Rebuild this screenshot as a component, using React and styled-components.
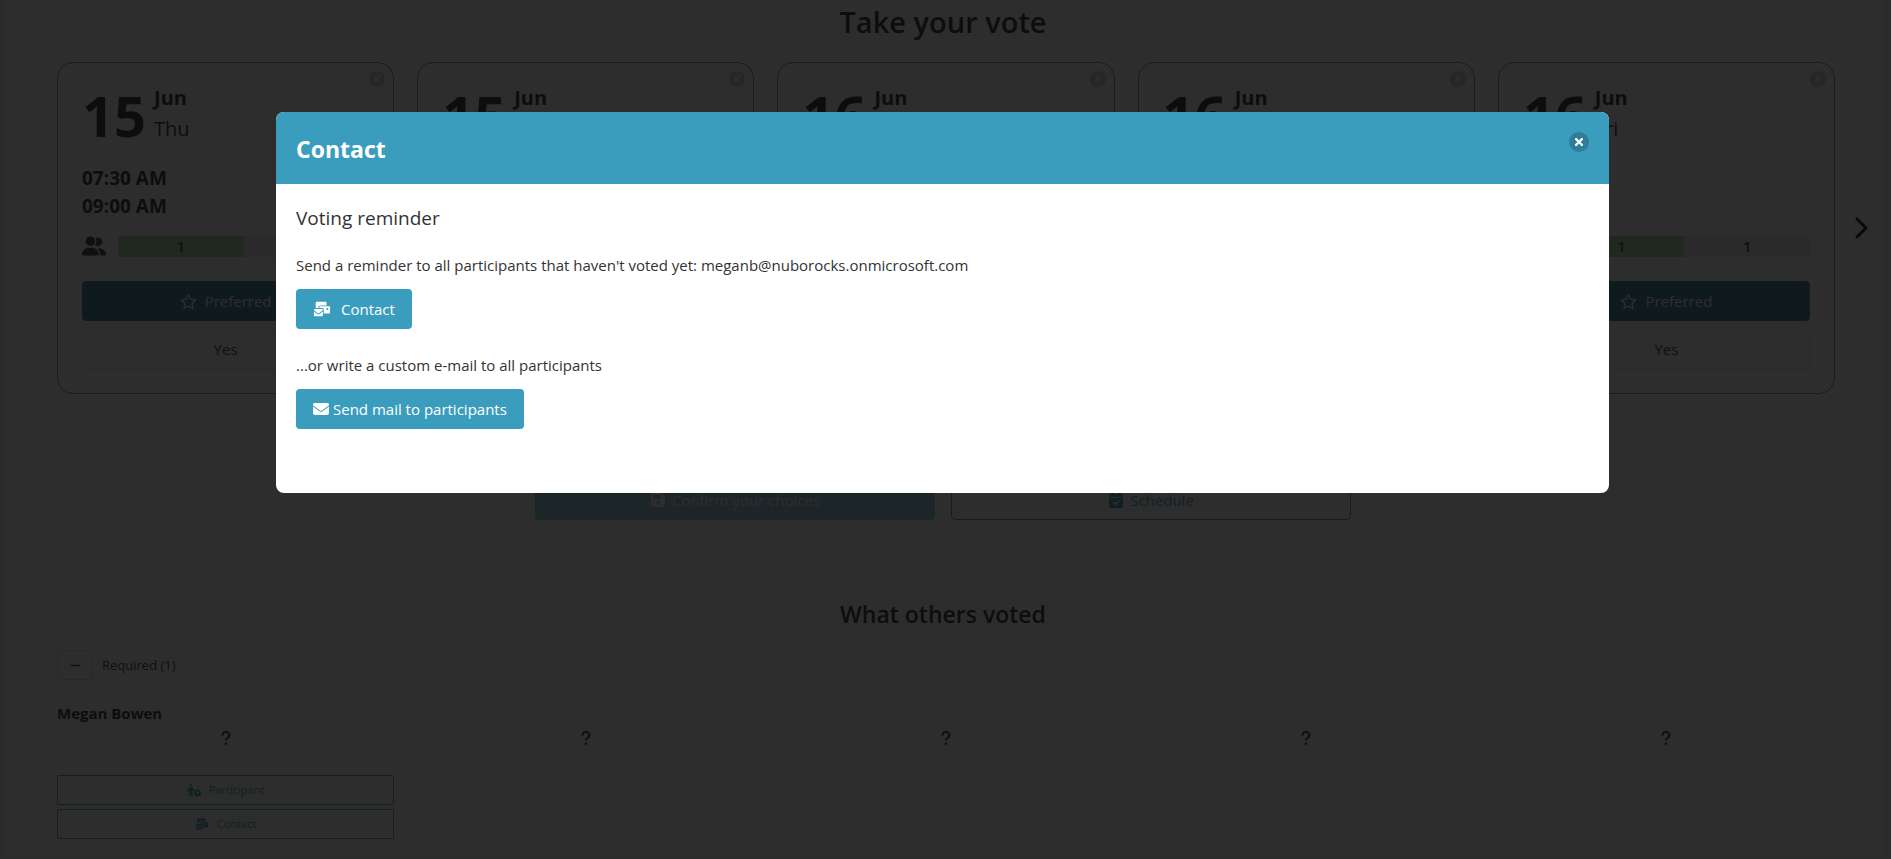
import React from "react";
import styled, { createGlobalStyle, css } from "styled-components";
import { FaTimes } from "react-icons/fa";
import {
  FaCalendarCheck,
  FaChevronRight,
  FaEnvelope,
  FaEnvelopesBulk,
  FaFloppyDisk,
  FaMinus,
  FaPersonCirclePlus,
  FaQuestion,
  FaRegStar,
  FaUserGroup,
} from "react-icons/fa6";

const slots = [
  { id: 1, day: 15, month: "Jun", weekday: "Thu", start: "07:30 AM", end: "09:00 AM" },
  { id: 2, day: 15, month: "Jun" },
  { id: 3, day: 16, month: "Jun" },
  { id: 4, day: 16, month: "Jun" },
  { id: 5, day: 16, month: "Jun", weekday: "Fri" },
];

export default function App() {
  return (
    <>
      <GlobalStyle />
      <Page>
        <Panel>
          <PageTitle>Take your vote</PageTitle>
          <SlotGrid>
            {slots.map((slot) => (
              <SlotCard key={slot.id} slot={slot} />
            ))}
          </SlotGrid>
          <NextButton type="button" aria-label="Next dates">
            <FaChevronRight />
          </NextButton>

          <Actions>
            <ActionButton type="button" $muted>
              <FaFloppyDisk size={16} /> Confirm your choices
            </ActionButton>
            <ActionButton type="button">
              <FaCalendarCheck size={16} /> Schedule
            </ActionButton>
          </Actions>

          <SectionTitle>What others voted</SectionTitle>
          <GroupRow>
            <ToggleButton type="button" aria-label="Collapse required">
              <FaMinus />
            </ToggleButton>
            <span>Required (1)</span>
          </GroupRow>
          <VoterName>Megan Bowen</VoterName>
          <VoteGrid>
            {slots.map((slot) => (
              <FaQuestion key={slot.id} size={16} />
            ))}
          </VoteGrid>
          <FooterGrid>
            <FooterButtons>
              <SmallButton type="button">
                <FaPersonCirclePlus /> Participant
              </SmallButton>
              <SmallButton type="button">
                <FaEnvelopesBulk /> Contact
              </SmallButton>
            </FooterButtons>
          </FooterGrid>
        </Panel>
      </Page>

      <Overlay>
        <Dialog role="dialog" aria-modal="true" aria-labelledby="contact-title">
          <DialogHeader>
            <DialogTitle id="contact-title">Contact</DialogTitle>
            <CloseButton type="button" aria-label="Close">
              <FaTimes />
            </CloseButton>
          </DialogHeader>
          <DialogBody>
            <DialogSubtitle>Voting reminder</DialogSubtitle>
            <DialogText>
              Send a reminder to all participants that haven't voted yet: meganb@nuborocks.onmicrosoft.com
            </DialogText>
            <PrimaryButton type="button" $gap={10}>
              <FaEnvelopesBulk size={18} /> Contact
            </PrimaryButton>
            <DialogText>...or write a custom e-mail to all participants</DialogText>
            <PrimaryButton type="button" $gap={4}>
              <FaEnvelope size={16} /> Send mail to participants
            </PrimaryButton>
          </DialogBody>
        </Dialog>
      </Overlay>
    </>
  );
}

function SlotCard({ slot }) {
  return (
    <Card>
      <RemoveButton type="button" aria-label="Remove date">
        <FaTimes />
      </RemoveButton>
      <DateRow>
        <Day>{slot.day}</Day>
        <div>
          <Month>{slot.month}</Month>
          <Weekday>{slot.weekday}</Weekday>
        </div>
      </DateRow>
      <Times>
        <div>{slot.start}</div>
        <div>{slot.end}</div>
      </Times>
      {slot.weekday && (
        <>
          <VotesRow>
            <FaUserGroup size={24} />
            <VotesBar>
              <VotesPart $yes>1</VotesPart>
              <VotesPart>1</VotesPart>
            </VotesBar>
          </VotesRow>
          <VoteButton type="button" $active>
            <FaRegStar size={17} /> Preferred
          </VoteButton>
          <VoteButton type="button">Yes</VoteButton>
        </>
      )}
    </Card>
  );
}

const GlobalStyle = createGlobalStyle`
  * {
    box-sizing: border-box;
  }

  body {
    margin: 0;
    height: 100vh;
    overflow: hidden;
    background-color: #f2f2f2;
    color: #333;
    font-family: "Open Sans", "Noto Sans", sans-serif;
    font-size: 15px;
    line-height: 24px;
  }

  button {
    font: inherit;
    cursor: pointer;
  }
`;

const Page = styled.main`
  padding: 0 9px 3px 3px;
`;

const Panel = styled.section`
  position: relative;
  padding: 0 47px 17px 54px;
  border-radius: 0 0 4px 4px;
  background-color: #fff;
`;

const PageTitle = styled.h1`
  margin: 0;
  padding: 2px 6px 20px 0;
  color: #222;
  font-size: 29px;
  font-weight: 600;
  line-height: 40px;
  text-align: center;
`;

const SlotGrid = styled.div`
  display: grid;
  grid-template-columns: repeat(5, 1fr);
  gap: 23px;
`;

const Card = styled.article`
  position: relative;
  height: 332px;
  padding: 20px 24px;
  border: 1px solid #3b9dbd;
  border-radius: 16px;
`;

const RemoveButton = styled.button`
  position: absolute;
  top: 8px;
  right: 8px;
  display: flex;
  justify-content: center;
  align-items: center;
  width: 16px;
  height: 16px;
  padding: 0;
  border: none;
  border-radius: 50%;
  background-color: #ccc;
  color: #fff;
  font-size: 10px;
`;

const DateRow = styled.div`
  display: flex;
  gap: 8px;
  height: 81px;
  color: #222;
`;

const Day = styled.div`
  font-size: 56px;
  font-weight: 700;
  line-height: 64px;
`;

const Month = styled.div`
  font-size: 20px;
  font-weight: 700;
  line-height: 30px;
`;

const Weekday = styled.div`
  font-size: 20px;
  line-height: 32px;
`;

const Times = styled.div`
  height: 66px;
  color: #222;
  font-size: 19px;
  font-weight: 700;
  line-height: 28px;
`;

const VotesRow = styled.div`
  display: flex;
  align-items: center;
  gap: 12px;
  height: 32px;
`;

const VotesBar = styled.div`
  display: flex;
  flex: 1;
  overflow: hidden;
  border-radius: 4px;
`;

const VotesPart = styled.div`
  flex: 1;
  background-color: ${({ $yes }) => ($yes ? "#a5dca0" : "#e6e6e6")};
  font-weight: 600;
  line-height: 21px;
  text-align: center;
`;

const VoteButton = styled.button`
  display: flex;
  justify-content: center;
  align-items: center;
  gap: 8px;
  width: 100%;
  height: 40px;
  margin-top: 8px;
  border: 1px solid ${({ $active }) => ($active ? "#2a7894" : "#e3e3e3")};
  border-radius: 4px;
  background-color: ${({ $active }) => ($active ? "#2a7894" : "#fff")};
  color: ${({ $active }) => ($active ? "#fff" : "#333")};

  ${VotesRow} + & {
    margin-top: 19px;
  }
`;

const NextButton = styled.button`
  position: absolute;
  top: 216px;
  right: 10px;
  padding: 0;
  border: none;
  background: none;
  color: #000;
  font-size: 24px;
  line-height: 0;
`;

const Actions = styled.div`
  display: flex;
  justify-content: center;
  gap: 16px;
  margin-top: 86px;
  padding-right: 6px;
`;

const ActionButton = styled.button`
  display: flex;
  justify-content: center;
  align-items: center;
  gap: 6px;
  width: 400px;
  height: 40px;
  border: 1px solid #3b9dbd;
  border-radius: 4px;
  background-color: #fff;
  color: #3b9dbd;

  ${({ $muted }) =>
    $muted &&
    css`
      border-color: #89c4d7;
      background-color: #89c4d7;
      color: #fff;
    `}
`;

const SectionTitle = styled.h2`
  margin: 77px 0 19px;
  padding-right: 6px;
  color: #222;
  font-size: 23px;
  font-weight: 600;
  line-height: 34px;
  text-align: center;
`;

const GroupRow = styled.div`
  display: flex;
  align-items: center;
  gap: 9px;
  font-size: 13px;
`;

const ToggleButton = styled.button`
  display: flex;
  justify-content: center;
  align-items: center;
  width: 36px;
  height: 30px;
  padding: 0;
  border: 1px solid #ddd;
  border-radius: 2px;
  background-color: #fff;
  color: #333;
`;

const VoterName = styled.div`
  margin-top: 21px;
  color: #222;
  font-weight: 700;
`;

const VoteGrid = styled.div`
  display: grid;
  grid-template-columns: repeat(5, 1fr);
  justify-items: center;
  gap: 23px;
  height: 50px;
  padding-top: 5px;
`;

const FooterGrid = styled.div`
  display: grid;
  grid-template-columns: repeat(5, 1fr);
  gap: 23px;
`;

const FooterButtons = styled.div`
  display: flex;
  flex-direction: column;
  gap: 4px;
`;

const SmallButton = styled.button`
  display: flex;
  justify-content: center;
  align-items: center;
  gap: 8px;
  height: 30px;
  border: 1px solid #3b9dbd;
  border-radius: 2px;
  background-color: #fff;
  color: #3b9dbd;
  font-size: 11px;

  svg {
    font-size: 14px;
  }
`;

const Overlay = styled.div`
  position: fixed;
  inset: 0;
  padding: 112px 282px 0 276px;
  background-color: rgba(11, 11, 11, 0.86);
`;

const Dialog = styled.section`
  overflow: hidden;
  border-radius: 8px;
  background-color: #fff;
`;

const DialogHeader = styled.header`
  display: flex;
  justify-content: space-between;
  align-items: flex-start;
  padding: 20px;
  background-color: #3b9dbd;
  color: #fff;
`;

const DialogTitle = styled.h2`
  margin: 0;
  font-size: 23px;
  font-weight: 700;
  line-height: 34px;
  height: 32px;
`;

const CloseButton = styled.button`
  display: flex;
  justify-content: center;
  align-items: center;
  width: 20px;
  height: 20px;
  padding: 0;
  border: none;
  border-radius: 50%;
  background-color: #2f7e97;
  color: #fff;
  font-size: 12px;
`;

const DialogBody = styled.div`
  padding: 20px 20px 64px;
`;

const DialogSubtitle = styled.h3`
  margin: 0 0 21px;
  font-size: 19px;
  font-weight: 400;
  line-height: 28px;
`;

const DialogText = styled.p`
  margin: 0 0 12px;

  button + & {
    margin-top: 24px;
  }
`;

const PrimaryButton = styled.button`
  display: flex;
  align-items: center;
  gap: ${({ $gap }) => $gap}px;
  height: 40px;
  padding: 0 17px;
  border: none;
  border-radius: 4px;
  background-color: #3b9dbd;
  color: #fff;
`;
